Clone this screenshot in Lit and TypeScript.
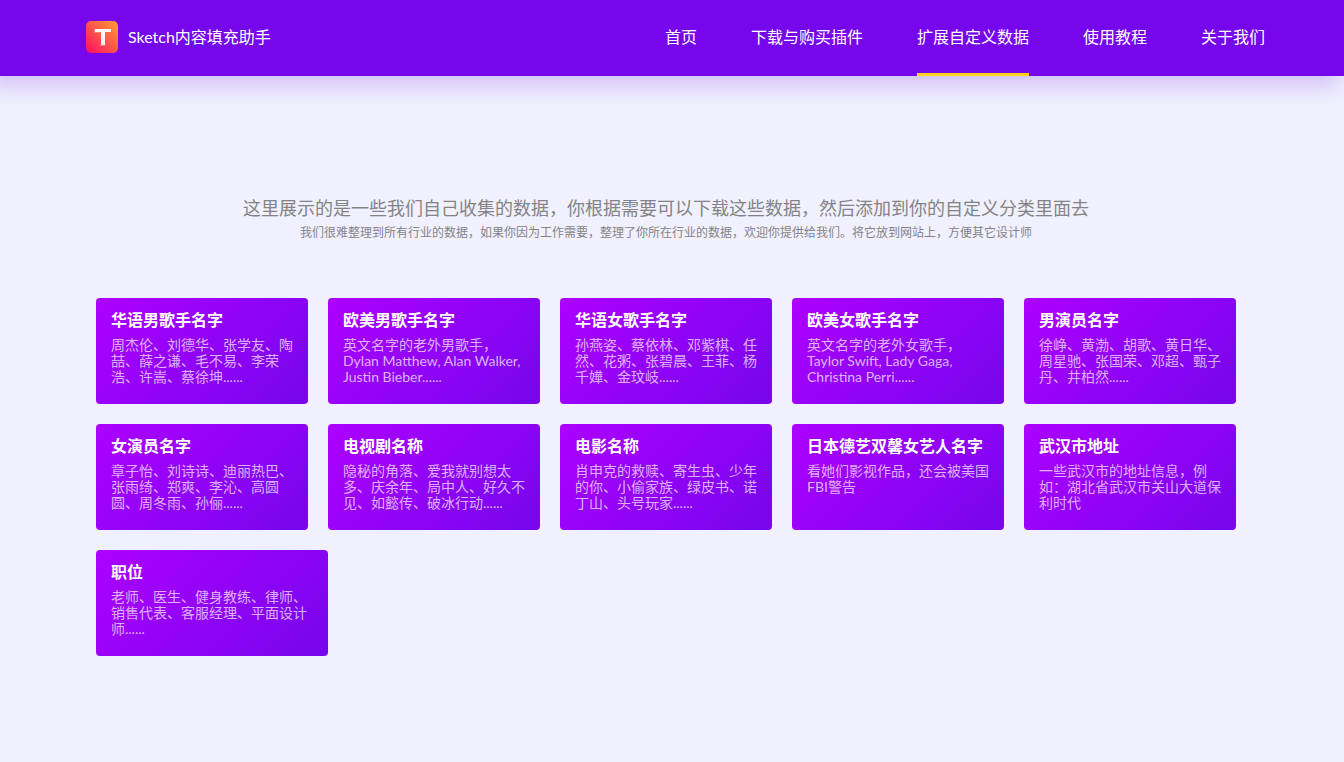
import { LitElement, html, css, svg } from "lit";
import { customElement, property } from "lit/decorators.js";

interface NavItem {
  label: string;
  active?: boolean;
}

interface Category {
  title: string;
  text: string;
}

const NAV: NavItem[] = [
  { label: "首页" },
  { label: "下载与购买插件" },
  { label: "扩展自定义数据", active: true },
  { label: "使用教程" },
  { label: "关于我们" },
];

const CATEGORIES: Category[] = [
  { title: "华语男歌手名字", text: "周杰伦、刘德华、张学友、陶喆、薛之谦、毛不易、李荣浩、许嵩、蔡徐坤......" },
  { title: "欧美男歌手名字", text: "英文名字的老外男歌手，Dylan Matthew, Alan Walker, Justin Bieber......" },
  { title: "华语女歌手名字", text: "孙燕姿、蔡依林、邓紫棋、任然、花粥、张碧晨、王菲、杨千嬅、金玟岐......" },
  { title: "欧美女歌手名字", text: "英文名字的老外女歌手，Taylor Swift, Lady Gaga, Christina Perri......" },
  { title: "男演员名字", text: "徐峥、黄渤、胡歌、黄日华、周星驰、张国荣、邓超、甄子丹、井柏然......" },
  { title: "女演员名字", text: "章子怡、刘诗诗、迪丽热巴、张雨绮、郑爽、李沁、高圆圆、周冬雨、孙俪......" },
  { title: "电视剧名称", text: "隐秘的角落、爱我就别想太多、庆余年、局中人、好久不见、如懿传、破冰行动......" },
  { title: "电影名称", text: "肖申克的救赎、寄生虫、少年的你、小偷家族、绿皮书、诺丁山、头号玩家......" },
  { title: "日本德艺双馨女艺人名字", text: "看她们影视作品，还会被美国FBI警告" },
  { title: "武汉市地址", text: "一些武汉市的地址信息，例如：湖北省武汉市关山大道保利时代" },
  { title: "职位", text: "老师、医生、健身教练、律师、销售代表、客服经理、平面设计师......" },
];

const logo = svg`
  <defs>
    <linearGradient id="tile" x1="0" y1="1" x2="1" y2="0">
      <stop offset="0" stop-color="#ff0a66" />
      <stop offset="1" stop-color="#ffa032" />
    </linearGradient>
    <linearGradient id="stem" x1="0" y1="0" x2="0" y2="1">
      <stop offset="0" stop-color="#ffffff" />
      <stop offset="1" stop-color="#ffe9e6" />
    </linearGradient>
  </defs>
  <rect width="32" height="32" rx="5" fill="url(#tile)" />
  <path d="M8 9h6v15h5v1h-5V12H8z" fill="#ffb09a" opacity=".5" />
  <path d="M9 8h16v3h-6v13h-4V11H9z" fill="url(#stem)" />`;

@customElement("data-card")
export class DataCard extends LitElement {
  @property() heading = "";
  @property() text = "";

  static styles = css`
    :host {
      display: block;
    }
    .card {
      display: block;
      box-sizing: border-box;
      height: 100%;
      min-height: 106px;
      padding: 11px 14px 18px 15px;
      border-radius: 4px;
      background: linear-gradient(135deg, #ad00ff, #7606ec);
      color: #fff;
      text-decoration: none;
    }
    .title {
      margin: 0 0 7px;
      font-size: 16px;
      line-height: 21px;
      font-weight: 700;
    }
    .text {
      margin: 0;
      font-size: 14px;
      line-height: 16px;
      color: rgba(255, 255, 255, 0.7);
    }
  `;

  render() {
    return html`<a class="card" href="#">
      <h3 class="title">${this.heading}</h3>
      <p class="text">${this.text}</p>
    </a>`;
  }
}

@customElement("app-root")
export class AppRoot extends LitElement {
  static styles = css`
    :host {
      display: block;
      min-height: 100vh;
      background: #f0f0ff;
      font-family: Lato, "Noto Sans CJK SC", sans-serif;
    }
    .header {
      padding-left: 8px;
      background: #7606ec;
      box-shadow: -8px 8px 20px 2px rgba(98, 6, 200, 0.2);
    }
    .bar {
      display: flex;
      justify-content: space-between;
      max-width: 1180px;
      height: 76px;
      margin: 0 auto;
    }
    .brand {
      display: flex;
      align-items: center;
      gap: 10px;
      padding-bottom: 2px;
      color: #fff;
      font-size: 16px;
      line-height: 20px;
      text-decoration: none;
    }
    .logo {
      display: block;
      width: 32px;
      height: 32px;
    }
    .nav {
      display: flex;
      gap: 54px;
      padding-right: 1px;
    }
    .link {
      display: flex;
      align-items: center;
      padding-top: 1px;
      border-bottom: 3px solid transparent;
      color: #fff;
      font-size: 16px;
      line-height: 20px;
      text-decoration: none;
    }
    .link.active {
      border-color: #ffd21e;
    }
    .main {
      padding: 118px 12px 106px 0;
    }
    .intro {
      text-align: center;
      color: #848484;
    }
    .lead {
      margin: 0;
      font-size: 18px;
      line-height: 28px;
    }
    .note {
      margin: 0;
      font-size: 12px;
      line-height: 22px;
    }
    .content {
      max-width: 1160px;
      margin: 0 auto;
    }
    .grid {
      display: grid;
      grid-template-columns: repeat(auto-fill, 232px);
      row-gap: 20px;
      margin: 54px -10px 0 10px;
    }
    .cell {
      margin-right: 20px;
    }
    .cell:last-child {
      margin-right: 0;
    }
  `;

  render() {
    return html`
      <header class="header">
        <div class="bar">
          <a class="brand" href="#">
            <svg class="logo" viewBox="0 0 32 32" aria-hidden="true">${logo}</svg>
            <span>Sketch内容填充助手</span>
          </a>
          <nav class="nav">
            ${NAV.map(
              (item) => html`<a class="link ${item.active ? "active" : ""}" href="#">${item.label}</a>`
            )}
          </nav>
        </div>
      </header>
      <main class="main">
        <div class="content">
          <div class="intro">
            <p class="lead">这里展示的是一些我们自己收集的数据，你根据需要可以下载这些数据，然后添加到你的自定义分类里面去</p>
            <p class="note">我们很难整理到所有行业的数据，如果你因为工作需要，整理了你所在行业的数据，欢迎你提供给我们。将它放到网站上，方便其它设计师</p>
          </div>
          <div class="grid">
            ${CATEGORIES.map(
              (c) => html`<data-card class="cell" .heading=${c.title} .text=${c.text}></data-card>`
            )}
          </div>
        </div>
      </main>
    `;
  }
}
